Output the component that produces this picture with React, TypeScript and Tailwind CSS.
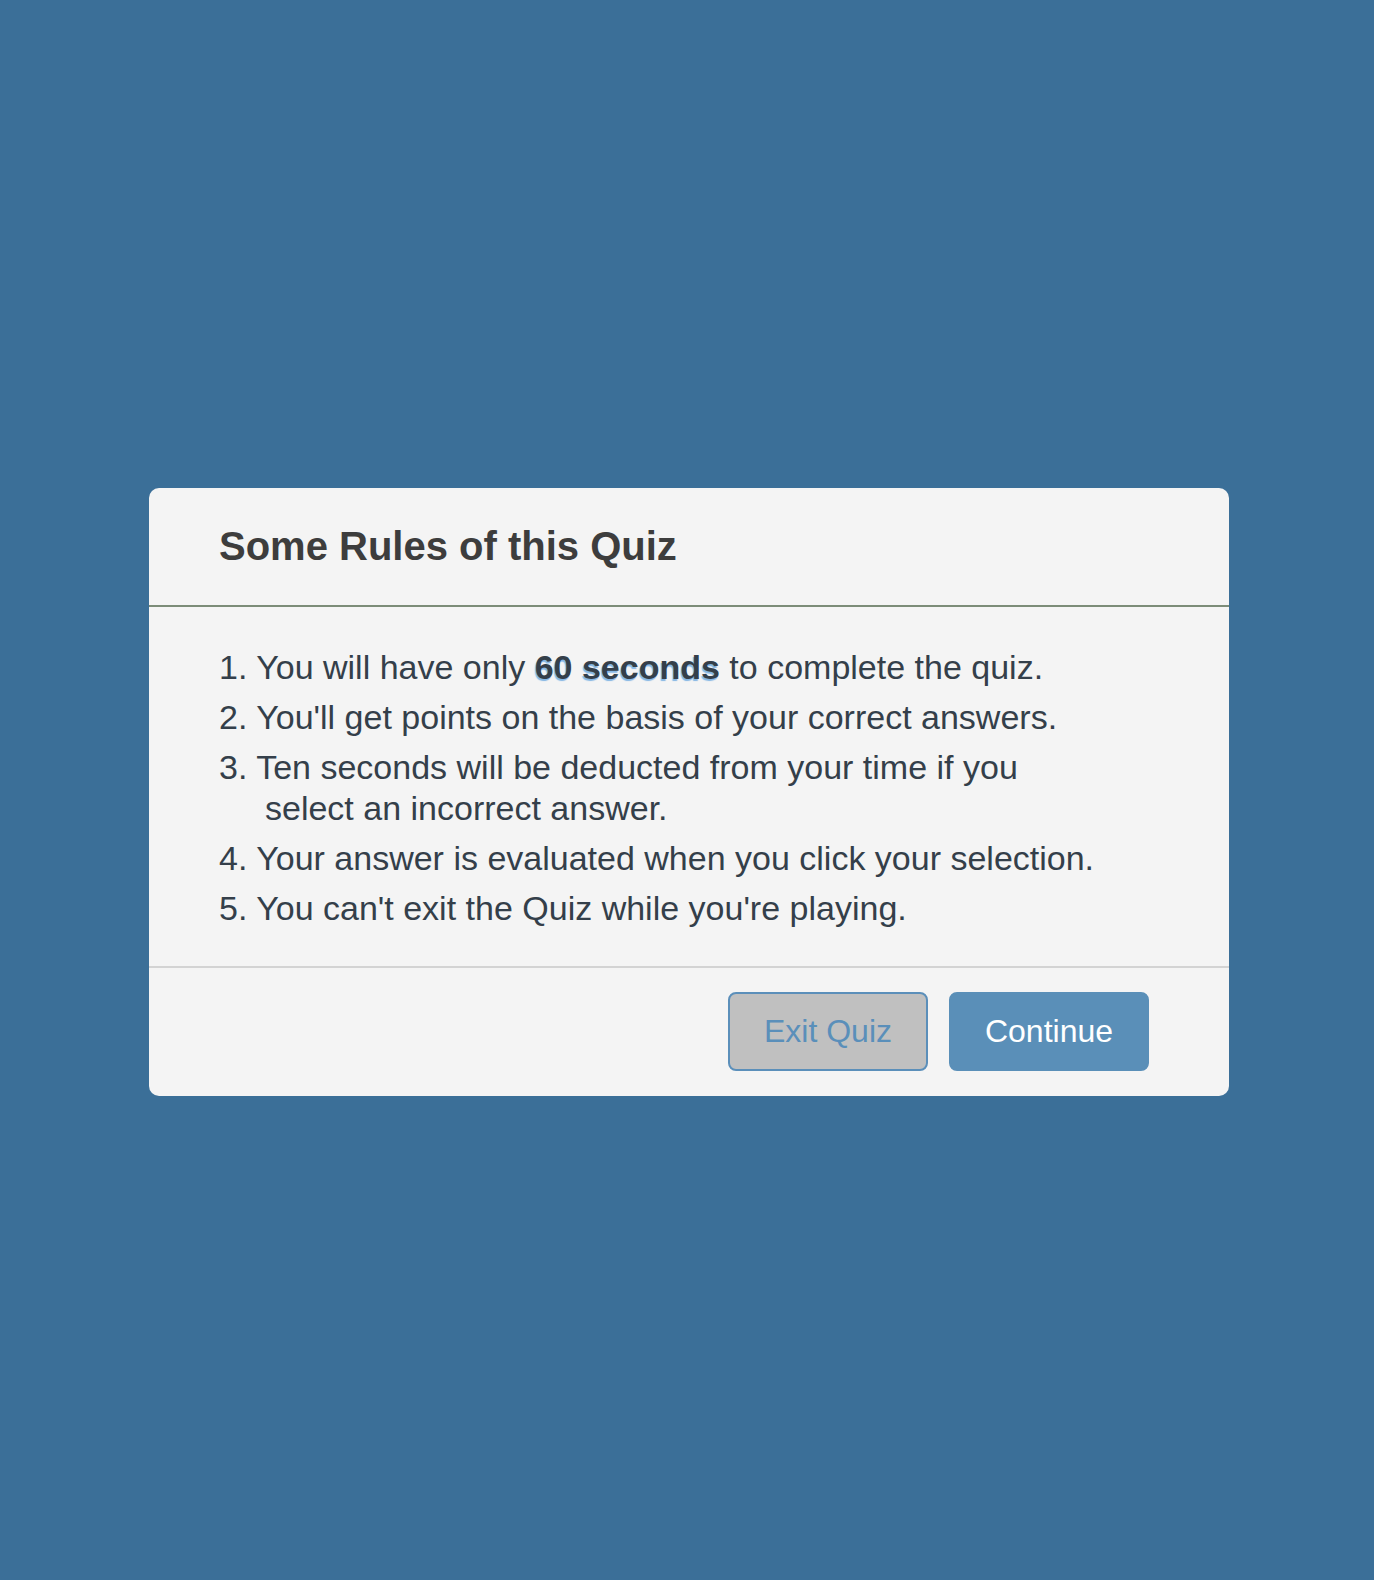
import React from "react";

export default function App() {
  return (
    <div
      className="h-[1580px] w-full flex items-center justify-center bg-[#3b6f98] pl-[4px] pt-[4px]"
      style={{ fontFamily: '"Liberation Sans", Arial, Helvetica, sans-serif' }}
    >
      <div className="w-[1080px] bg-[#f4f4f4] rounded-[10px] overflow-hidden">
        <div className="px-[70px] pt-[35px] pb-[36px] border-b-2 border-[#7c8c78]">
          <h1 className="text-[40px] leading-[46px] font-bold text-[#3d3d3d]">
            Some Rules of this Quiz
          </h1>
        </div>
        <div className="px-[70px] pt-[40px] pb-[37px]">
          <ol className="flex flex-col gap-[9.4px] text-[34px] leading-[40.8px] text-[#343f4a]">
            <li>
              1. You will have only{" "}
              <span className="font-bold [text-shadow:-1px_2px_1px_#84b6e4]">
                60 seconds
              </span>{" "}
              to complete the quiz.
            </li>
            <li>2. You'll get points on the basis of your correct answers.</li>
            <li>
              <div>3. Ten seconds will be deducted from your time if you</div>
              <div className="pl-[46px]">select an incorrect answer.</div>
            </li>
            <li>4. Your answer is evaluated when you click your selection.</li>
            <li>5. You can't exit the Quiz while you're playing.</li>
          </ol>
        </div>
        <div className="border-t-2 border-[#d3d3d3] pt-[24px] pb-[25px] pr-[80px] flex justify-end gap-[21px]">
          <button className="w-[200px] h-[79px] rounded-[8px] border-2 border-[#5b8fba] bg-[#c0c0c0] text-[#5a8fba] text-[32px] leading-[37px]">
            Exit Quiz
          </button>
          <button className="w-[200px] h-[79px] rounded-[8px] border-2 border-[#5a8fb8] bg-[#5a8fb8] text-white text-[32px] leading-[37px]">
            Continue
          </button>
        </div>
      </div>
    </div>
  );
}
